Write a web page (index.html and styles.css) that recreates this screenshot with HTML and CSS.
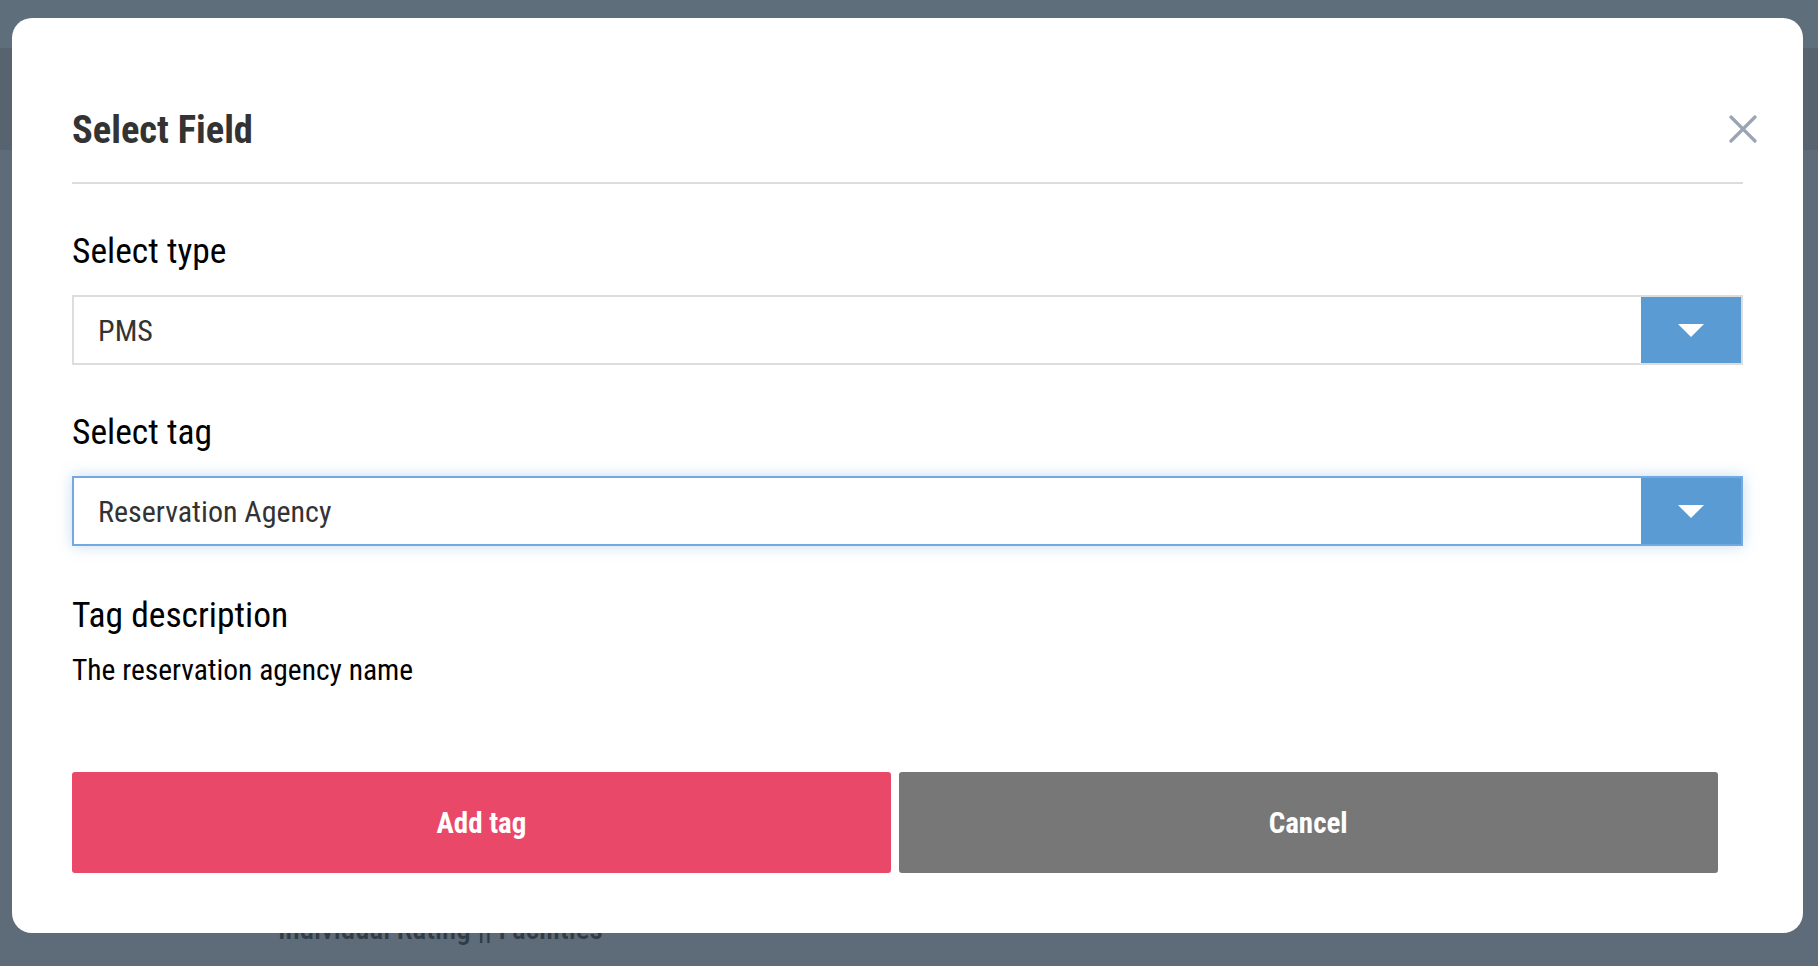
FILE: index.html
```html
<!DOCTYPE html>
<html lang="en">
<head>
  <meta charset="UTF-8">
  <title>Select Field</title>
  <link rel="stylesheet" href="styles.css">
</head>
<body>
  <div class="page">
    <div class="topbar"></div>
    <div class="subbar"></div>
    <div class="page-body">
      <p class="page-row">Individual Rating || Facilities</p>
    </div>
  </div>

  <div class="overlay">
    <div class="modal">
      <div class="modal-header">
        <h2 class="modal-title">Select Field</h2>
        <button class="close-btn" aria-label="Close">
          <svg width="28" height="28" viewBox="0 0 28 28">
            <path d="M2 2 L26 26 M26 2 L2 26" stroke="#9aa4b2" stroke-width="3.2" stroke-linecap="round" fill="none"/>
          </svg>
        </button>
      </div>

      <div class="field">
        <label class="field-label">Select type</label>
        <div class="select">
          <span class="select-value">PMS</span>
          <span class="select-arrow"><i class="caret"></i></span>
        </div>
      </div>

      <div class="field">
        <label class="field-label">Select tag</label>
        <div class="select focused">
          <span class="select-value">Reservation Agency</span>
          <span class="select-arrow"><i class="caret"></i></span>
        </div>
      </div>

      <div class="description">
        <h3 class="field-label">Tag description</h3>
        <p class="description-text">The reservation agency name</p>
      </div>

      <div class="actions">
        <button class="btn btn-add">Add tag</button>
        <button class="btn btn-cancel">Cancel</button>
      </div>
    </div>
  </div>
</body>
</html>
```

FILE: styles.css
```css
html, body {
  margin: 0;
  height: 100%;
  overflow: hidden;
}
body {
  font-family: 'Roboto Condensed', 'Roboto', sans-serif;
  font-stretch: 75%;
  background-color: #5e6c79;
}
.page {
  height: 100%;
}
.topbar {
  height: 48px;
  background-color: #5f6e7b;
}
.subbar {
  height: 102px;
  background-color: #57646f;
}
.page-body {
  padding: 762px 0 0 278px;
}
.page-row {
  margin: 0;
  font-size: 29px;
  line-height: 34px;
  font-weight: 500;
  color: #313c47;
}
.overlay {
  position: fixed;
  inset: 0;
}
.modal {
  margin: 18px 15px 0 12px;
  height: 915px;
  box-sizing: border-box;
  background: #fff;
  border-radius: 20px;
  padding: 0 60px 60px;
  display: flex;
  flex-direction: column;
}
.modal-header {
  display: flex;
  justify-content: space-between;
  align-items: flex-start;
  padding-top: 88px;
  padding-bottom: 28px;
  border-bottom: 2px solid #dcdcdc;
}
.modal-title {
  margin: 0;
  font-size: 38.5px;
  line-height: 48px;
  font-weight: 700;
  color: #333;
}
.close-btn {
  background: none;
  border: none;
  padding: 0;
  margin: 9px -14px 0 0;
  cursor: pointer;
  line-height: 0;
}
.field-label {
  display: block;
  margin: 0;
  font-size: 35.5px;
  line-height: 36px;
  font-weight: 400;
  color: #000;
}
.field {
  margin-top: 49px;
}
.field .field-label {
  margin-bottom: 26px;
}
.select {
  display: flex;
  align-items: stretch;
  height: 70px;
  box-sizing: border-box;
  border: 2px solid #dddddd;
  background: #fff;
}
.select.focused {
  border-color: #72a9e2;
  box-shadow: 0 0 14px rgba(91, 155, 211, 0.35);
}
.select-value {
  flex: 1;
  display: flex;
  align-items: center;
  padding-left: 24px;
  font-size: 30px;
  color: #333;
}
.select-arrow {
  width: 100px;
  display: flex;
  align-items: center;
  justify-content: center;
  background-color: #5b9bd3;
}
.caret {
  width: 0;
  height: 0;
  border-left: 13px solid transparent;
  border-right: 13px solid transparent;
  border-top: 13px solid #fff;
}
.description {
  margin-top: 51px;
}
.description-text {
  margin: 20px 0 0;
  font-size: 29.5px;
  line-height: 34px;
  font-weight: 400;
  color: #000;
}
.actions {
  margin-top: auto;
  display: flex;
  gap: 8px;
}
.btn {
  width: 49%;
  height: 101px;
  border: none;
  border-radius: 3px;
  font-family: inherit;
  font-stretch: 75%;
  font-size: 29px;
  font-weight: 700;
  color: #fff;
  cursor: pointer;
}
.btn-add {
  background-color: #ea4868;
}
.btn-cancel {
  background-color: #777;
}
```
